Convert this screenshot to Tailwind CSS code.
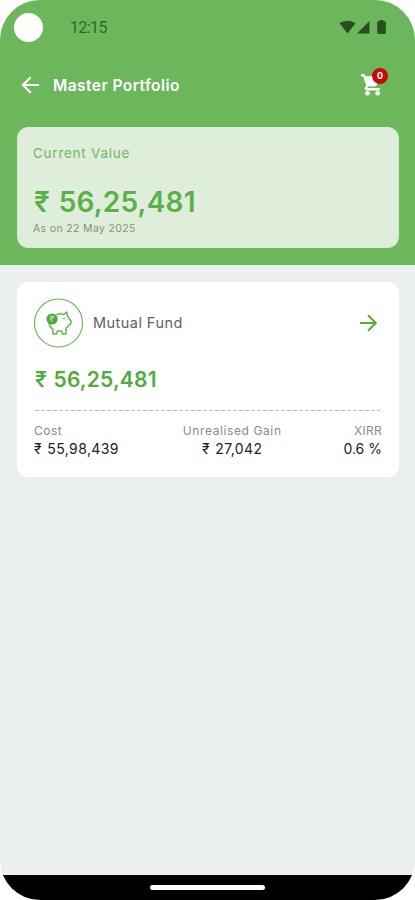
<!DOCTYPE html>
<html lang="en">
<head>
<meta charset="utf-8">
<meta name="viewport" content="width=device-width, initial-scale=1">
<title>Master Portfolio</title>
<script src="https://cdn.jsdelivr.net/npm/@tailwindcss/browser@4"></script>
</head>
<body class="bg-white font-['Inter','Noto_Sans',sans-serif]">
<div class="flex h-[900px] w-[415px] flex-col overflow-hidden rounded-[40px] bg-[#ebefF0] whitespace-nowrap">
  <header class="h-[265px] shrink-0 bg-[#6cb75c]">
    <div class="flex h-[54px] items-center pl-[14px] pr-[29px]">
      <div class="size-[29px] rounded-full bg-white"></div>
      <span class="ml-[27px] mt-[2px] font-[Roboto] text-[16px] leading-5 tracking-[-0.6px] text-[#36672b]">12:15</span>
      <div class="ml-auto flex items-center text-[#28501f]">
        <svg class="h-[14px] w-[17px]" viewBox="0 0 17 14" fill="currentColor"><path d="M.5 3.300C5-.2 12-.2 16.500 3.300L8.500 13.400Z"/></svg>
        <svg class="ml-px h-[14px] w-[13px]" viewBox="0 0 13 14" fill="currentColor"><path d="M12.500 1v12.500H0Z"/></svg>
        <svg class="ml-[7px] h-[14px] w-[9px]" viewBox="0 0 9 14" fill="currentColor"><path d="M2.500 0h4v1.300H8q.8 0 .8.8v11q0 .8-.8.8H1q-.8 0-.8-.8v-11q0-.8.8-.8h1.500Z"/></svg>
      </div>
    </div>
    <div class="flex h-[63px] items-center pl-[21px] pr-[31px]">
      <svg class="-mt-[2px] h-[18px] w-[19px]" viewBox="0 0 19 18" fill="none" stroke="#fff" stroke-width="2.200"><path d="M18 9H2M9.700 1.200 1.900 9l7.800 7.800"/></svg>
      <h1 class="ml-[13px] text-[15.500px] leading-5 font-semibold tracking-[0.45px] text-white">Master Portfolio</h1>
      <div class="relative -mt-[2px] ml-auto h-[24px] w-[24px]">
        <svg class="ml-px h-[23px] w-5" viewBox="0 0 20 23" fill="#fff"><path d="M0 1h3.500l1.200 2.200h13q1.600.2 1 1.600l-2.800 6.900q-.6 1.700-1.900 1.700H6.900L6.300 15h12.500v2.500H5.700q-2.800-.3-1.700-2.900l1.200-2.200L2.100 3.500H0Z"/><circle cx="6.500" cy="20.300" r="2.300"/><circle cx="16.700" cy="20.300" r="2.300"/></svg>
        <span class="absolute -top-[5px] left-[12px] flex size-[16px] items-center justify-center rounded-full bg-[#c60b0f] text-[9px] leading-none font-bold text-white">0</span>
      </div>
    </div>
    <section class="mx-[17px] mt-[10px] h-[121px] w-[382px] rounded-[11px] border border-[#d4eccd] bg-[#dfeddb] px-[15px] pt-[15px]">
      <p class="text-[13.500px] leading-5 tracking-[0.75px] text-[#72b765]">Current Value</p>
      <p class="mt-[21px] pl-px text-[28px] leading-9 font-semibold tracking-[0.2px] [word-spacing:1.500px] text-[#5bb149]">₹ 56,25,481</p>
      <p class="mt-px text-[10.500px] leading-4 tracking-[0.35px] text-[#83917f]">As on 22 May 2025</p>
    </section>
  </header>
  <main class="flex-1 px-[17px] pt-[17px]">
    <section class="h-[195px] w-[382px] rounded-[11px] bg-white px-[17px] pt-[16px]">
      <div class="flex items-center pr-[4px]">
        <svg class="size-[50px]" viewBox="0 0 50 50" fill="none" stroke="#65b453"><circle cx="24.500" cy="25" r="24" stroke-width="1.100"/><path d="M22.500 16.500q4-1.300 7.300 0l3-2.500.6 4.200q1.600 1.300 2 3.300l1.500.8v3.700l-2 .9q-.9 2.300-2.900 3.300v5.700h-3.400l-.9-3h-4.300l-.9 3h-3.500v-4.400q-3.400-2.300-4-6.500" stroke-width="1.500" stroke-linejoin="round"/><circle cx="18.100" cy="21" r="5.600" fill="#51a93e" stroke="none"/><path d="M15.800 18.300h4.600M15.800 20.200h4.600M16.500 18.300q5 1.800-.4 3l2.800 2.900" stroke="#d5edcf" stroke-width=".8"/><path d="M28.500 20.700q1.500-.5 2.600.3"/></svg>
        <h2 class="ml-[9px] text-[14.500px] leading-5 tracking-[0.45px] text-[#626262]">Mutual Fund</h2>
        <svg class="ml-auto h-[18px] w-[18px]" viewBox="0 0 18 18" fill="none" stroke="#55ad35" stroke-width="2"><path d="M0 9h16M8 1.200 15.800 9 8 16.800"/></svg>
      </div>
      <p class="mt-[18px] pl-px text-[21px] leading-7 font-semibold tracking-[0.2px] [word-spacing:1px] text-[#51ac3b]">₹ 56,25,481</p>
      <svg class="mt-[16px] ml-px h-px w-[345px]" viewBox="0 0 345 1"><path d="M0 .5h345" stroke="#b9b9b9" stroke-dasharray="4 2"/></svg>
      <div class="mt-[10px] flex justify-between text-[14px] leading-[19px] tracking-[0.4px] text-[#222]">
        <div><p class="text-[12px] tracking-[0.5px] text-[#8b8b8b]">Cost</p><p class="-mt-px [word-spacing:1px]">₹ 55,98,439</p></div>
        <div class="pl-[2px] text-center"><p class="text-[12px] tracking-[0.6px] text-[#8b8b8b]">Unrealised Gain</p><p class="-mt-px [word-spacing:1px]">₹ 27,042</p></div>
        <div class="text-right"><p class="text-[12px] tracking-[0.3px] text-[#8b8b8b]">XIRR</p><p class="-mt-px tracking-[0px]">0.6 %</p></div>
      </div>
    </section>
  </main>
  <footer class="flex h-[25px] shrink-0 justify-center bg-black pt-[10px]"><div class="h-[5px] w-[115px] rounded-full bg-white"></div></footer>
</div>
</body>
</html>
